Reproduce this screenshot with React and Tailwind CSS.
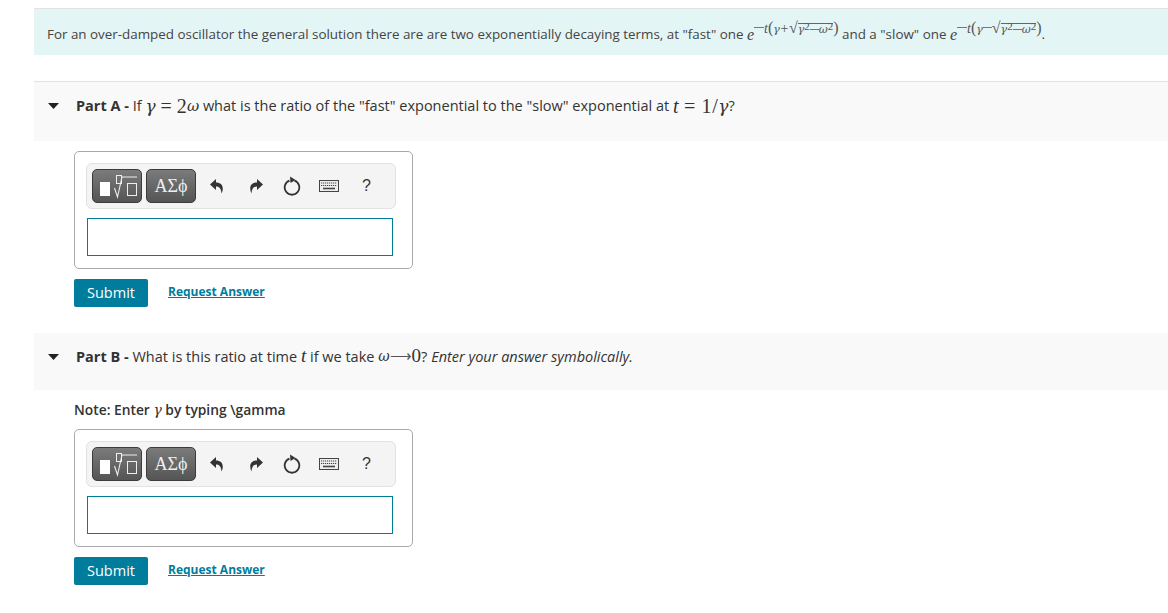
const M = ({ children, className = '' }) => (
    <span className={`font-['Liberation_Serif',serif] ${className}`}>{children}</span>
);

const I = ({ children, className = '' }) => (
    <span className={`font-['Liberation_Serif',serif] italic ${className}`}>{children}</span>
);

// greek letters read closer to the math font in DejaVu
const G = ({ children, className = '' }) => (
    <span className={`font-['DejaVu_Serif',serif] italic ${className}`}>{children}</span>
);

const Sup = ({ children }) => (
    <span className="relative top-[-3px] text-[11px]">{children}</span>
);

const Exponent = ({ sign }) => (
    <span className="relative top-[-7px] inline-flex items-baseline text-[14px] font-['Liberation_Serif',serif] leading-none text-[#555]">
        <span className="w-[10px] h-px bg-[#777] self-center" />
        <span className="italic">t</span>
        <span className="text-[16px]">(</span>
        <G className="text-[11px]">γ</G>
        {sign === '+' ? <span className="w-[9px] text-center">+</span> : <span className="w-[9px] h-px bg-[#777] self-center" />}
        <span className="text-[16px]">√</span>
        <span className="border-t border-[#666] inline-flex items-baseline">
            <G className="text-[11px]">γ</G>
            <Sup>2</Sup>
            <span className="w-[9px] h-px bg-[#777] self-center" />
            <G className="text-[11px]">ω</G>
            <Sup>2</Sup>
        </span>
        <span className="text-[16px]">)</span>
    </span>
);

const Caret = () => (
    <svg className="w-[11px] h-[6px] mt-[2px] shrink-0" viewBox="0 0 11 6">
        <path d="M0 0h11L5.5 6z" fill="#222" />
    </svg>
);

const EditorCard = () => (
    <div className="w-[339px] h-[118px] border border-[#aaa] rounded-[5px] pt-[11px] pl-[11px]">
        <div className="w-[310px] h-[46px] bg-[#f4f4f4] border border-[#e2e2e2] rounded-[6px] flex items-center pl-[5px]">
            <div className="w-[50px] h-[34px] rounded-[5px] border border-[#3c3c3c] bg-gradient-to-b from-[#7b7b7b] to-[#555] flex items-center justify-center">
                <svg className="w-[42px] h-[28px]" viewBox="0 0 42 28" fill="none">
                    <rect x="4" y="10" width="10" height="14" fill="#fff" />
                    <rect x="20.5" y="3.5" width="5" height="8" stroke="#eee" />
                    <path d="M18.5 16l3 9 4.5-20h15" stroke="#eee" strokeWidth="1.1" />
                    <rect x="31.5" y="11.5" width="9" height="12" stroke="#eee" />
                </svg>
            </div>
            <div className="ml-[4px] w-[50px] h-[34px] rounded-[5px] border border-[#3c3c3c] bg-gradient-to-b from-[#7b7b7b] to-[#555] flex items-center justify-center text-[#eee] text-[18px] font-['Liberation_Serif',serif]">
                ΑΣϕ
            </div>
            <svg className="ml-[14px] w-[14px] h-[16px]" viewBox="0 0 14 16">
                <path d="M6 1L0 6.5 6 12V8.5c3 0 5 1.5 5.5 7C14.5 9 12 4.5 6 4.5z" fill="#333" />
            </svg>
            <svg className="ml-[25px] w-[14px] h-[16px]" viewBox="0 0 14 16">
                <path d="M8 1l6 5.5L8 12V8.5c-3 0-5 1.5-5.5 7C-.5 9 2 4.5 8 4.5z" fill="#333" />
            </svg>
            <svg className="ml-[20px] w-[18px] h-[20px]" viewBox="0 0 18 20" fill="none">
                <path d="M6.5 4.6a7.3 7.3 0 1 0 5 0" stroke="#333" strokeWidth="1.8" />
                <path d="M7 0.5l5.5 3.5-5 3z" fill="#333" />
            </svg>
            <svg className="ml-[18px] w-[20px] h-[12px]" viewBox="0 0 20 12" fill="none">
                <rect x="0.5" y="0.5" width="19" height="11" stroke="#444" fill="#eee" />
                <path d="M2 3h16M2 5.5h16" stroke="#444" strokeWidth="1.2" strokeDasharray="1.2 0.8" />
                <path d="M4 8.5h12" stroke="#444" strokeWidth="1.6" />
            </svg>
            <span className="ml-[23px] text-[#333] text-[16px] font-['Liberation_Sans',sans-serif]">?</span>
        </div>
        <div className="mt-[9px] ml-px w-[306px] h-[38px] border border-[#007c9d] bg-white" />
    </div>
);

const Actions = () => (
    <div className="mt-[10px] flex items-center">
        <button className="w-[74px] h-[28px] bg-[#007c9d] rounded-[2px] text-white text-[14.5px]">Submit</button>
        <a className="ml-[20px] pb-[2px] text-[#007c9d] text-[12px] font-bold underline">Request Answer</a>
    </div>
);

const App = () => {
    return (
        <div className="w-[1168px] h-[613px] overflow-hidden bg-white pl-[34px] pt-[8px] font-['Open_Sans',sans-serif] text-[#333]">
            {/* Intro band */}
            <div className="h-[47px] border-t border-[#e3e3e3] bg-[#e4f5f6] flex items-center pl-[13px] pt-[5px] text-[13.4px] text-[#444] whitespace-nowrap">
                For an over-damped oscillator the general solution there are are two exponentially decaying terms, at "fast" one&nbsp;
                <I className="text-[16px]">e</I>
                <Exponent sign="+" />
                &nbsp;and a "slow" one&nbsp;
                <I className="text-[16px]">e</I>
                <Exponent sign="-" />
                <span>.</span>
            </div>

            {/* Part A */}
            <div className="mt-[26px] h-[60px] border-t border-[#e3e3e3] bg-[#f9f9f9] flex items-start pt-[13px] pl-[14px] text-[14.5px] whitespace-nowrap">
                <div className="h-[20px] flex items-center"><Caret /></div>
                <span className="ml-[17px] font-bold">Part A -</span>
                <span>&nbsp;If&nbsp;</span>
                <G className="text-[17px] leading-[22px]">γ</G>
                <M className="text-[20px] leading-[22px]">&nbsp;=&nbsp;2</M>
                <G className="text-[15px] leading-[22px]">ω</G>
                <span>&nbsp;what is the ratio of the "fast" exponential to the "slow" exponential at&nbsp;</span>
                <I className="text-[20px] leading-[22px]">t</I>
                <M className="text-[20px] leading-[22px] tracking-[0.6px]">&nbsp;=&nbsp;1/</M>
                <G className="text-[17px] leading-[22px]">γ</G>
                <span>?</span>
            </div>
            <div className="pl-[40px] pt-[10px]">
                <EditorCard />
                <Actions />
            </div>

            {/* Part B */}
            <div className="mt-[26px] h-[57px] bg-[#f9f9f9] flex items-start pt-[13px] pl-[14px] text-[14.5px] whitespace-nowrap">
                <div className="h-[20px] flex items-center"><Caret /></div>
                <span className="ml-[17px] font-bold">Part B -</span>
                <span>&nbsp;What is this ratio at time&nbsp;</span>
                <I className="text-[19px] leading-[20px]">t</I>
                <span>&nbsp;if we take&nbsp;</span>
                <G className="text-[14px] leading-[20px]">ω</G>
                <M className="text-[15px] leading-[20px] text-[#555]">⟶</M>
                <M className="text-[19px] leading-[20px]">0</M>
                <span>?&nbsp;</span>
                <em>Enter your answer symbolically.</em>
            </div>
            <div className="pl-[40px]">
                <div className="mt-[11px] h-[18px] flex items-center text-[13.8px] font-semibold whitespace-nowrap">
                    Note: Enter&nbsp;<G className="text-[14px] font-normal">γ</G>&nbsp;by typing \gamma
                </div>
                <div className="mt-[10px]">
                    <EditorCard />
                </div>
                <Actions />
            </div>
        </div>
    );
};

export default App;
